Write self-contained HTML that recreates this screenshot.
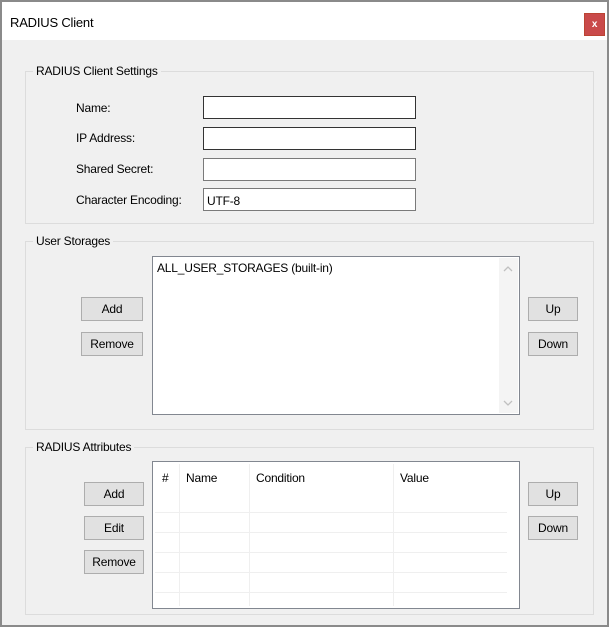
<!DOCTYPE html>
<html><head><style>
*{box-sizing:border-box;margin:0;padding:0}
body{width:611px;height:627px;background:#fff;font-family:"Liberation Sans",Arial,sans-serif;font-size:12px;color:#000;position:relative;overflow:hidden;letter-spacing:-0.2px}
.win{position:absolute;left:0;top:0;width:609px;height:627px;border:2px solid #8a8a8a;background:#f0f0f0}
.title{position:absolute;left:0;top:0;width:605px;height:38px;background:#fff}
.title span{position:absolute;left:8px;top:13px;font-size:13px}
.close{position:absolute;left:582px;top:11px;width:21px;height:23px;background:#c94a4a;color:#fff;font-size:10px;font-weight:bold;text-align:center;line-height:22px;border:1px solid #b43}
.a{position:absolute}
.grp{position:absolute;border:1px solid #dcdcdc}
.leg{position:absolute;background:#f0f0f0;padding:0 3px;top:-8px;left:7px}
.inp{position:absolute;background:#fff;border:1px solid #7a7a7a;height:23px;width:213px;padding:5px 3px}
.btn{position:absolute;background:#e1e1e1;border:1px solid #adadad;text-align:center;line-height:22px;height:24px}
.box{position:absolute;background:#fff;border:1px solid #828790}
</style></head><body>
<div class="win">
<div class="title"><span>RADIUS Client</span><div class="close">x</div></div>
</div>
<div class="grp" style="left:25px;top:71px;width:569px;height:153px"><div class="leg">RADIUS Client Settings</div></div>
<div class="a" style="left:76px;top:101px">Name:</div>
<div class="a" style="left:76px;top:131px">IP Address:</div>
<div class="a" style="left:76px;top:162px">Shared Secret:</div>
<div class="a" style="left:76px;top:193px">Character Encoding:</div>
<div class="inp" style="left:203px;top:96px;border-color:#333"></div>
<div class="inp" style="left:203px;top:127px;border-color:#333"></div>
<div class="inp" style="left:203px;top:158px"></div>
<div class="inp" style="left:203px;top:188px">UTF-8</div>

<div class="grp" style="left:25px;top:241px;width:569px;height:189px"><div class="leg">User Storages</div></div>
<div class="box" style="left:152px;top:256px;width:368px;height:159px">
<div class="a" style="left:4px;top:4px">ALL_USER_STORAGES (built-in)</div>
<div class="a" style="left:346px;top:1px;width:19px;height:155px;background:#f4f4f4"></div>
<svg class="a" style="left:350px;top:8px" width="10" height="8"><path d="M1 6 L5 2 L9 6" stroke="#c0c0c0" stroke-width="1.3" fill="none"/></svg>
<svg class="a" style="left:350px;top:142px" width="10" height="8"><path d="M1 2 L5 6 L9 2" stroke="#c0c0c0" stroke-width="1.3" fill="none"/></svg>
</div>
<div class="btn" style="left:81px;top:297px;width:62px">Add</div>
<div class="btn" style="left:81px;top:332px;width:62px">Remove</div>
<div class="btn" style="left:528px;top:297px;width:50px">Up</div>
<div class="btn" style="left:528px;top:332px;width:50px">Down</div>

<div class="grp" style="left:25px;top:447px;width:569px;height:168px"><div class="leg">RADIUS Attributes</div></div>
<div class="box" style="left:152px;top:461px;width:368px;height:148px">
<div class="a" style="left:9px;top:9px">#</div>
<div class="a" style="left:33px;top:9px">Name</div>
<div class="a" style="left:103px;top:9px">Condition</div>
<div class="a" style="left:247px;top:9px">Value</div>
<div class="a" style="left:26px;top:2px;width:1px;height:142px;background:#efefef"></div>
<div class="a" style="left:96px;top:2px;width:1px;height:142px;background:#efefef"></div>
<div class="a" style="left:240px;top:2px;width:1px;height:142px;background:#efefef"></div>
<div class="a" style="left:2px;top:50px;width:352px;height:1px;background:#efefef"></div>
<div class="a" style="left:2px;top:70px;width:352px;height:1px;background:#efefef"></div>
<div class="a" style="left:2px;top:90px;width:352px;height:1px;background:#efefef"></div>
<div class="a" style="left:2px;top:110px;width:352px;height:1px;background:#efefef"></div>
<div class="a" style="left:2px;top:130px;width:352px;height:1px;background:#efefef"></div>
</div>
<div class="btn" style="left:84px;top:482px;width:60px">Add</div>
<div class="btn" style="left:84px;top:516px;width:60px">Edit</div>
<div class="btn" style="left:84px;top:550px;width:60px">Remove</div>
<div class="btn" style="left:528px;top:482px;width:50px">Up</div>
<div class="btn" style="left:528px;top:516px;width:50px">Down</div>
</body></html>
